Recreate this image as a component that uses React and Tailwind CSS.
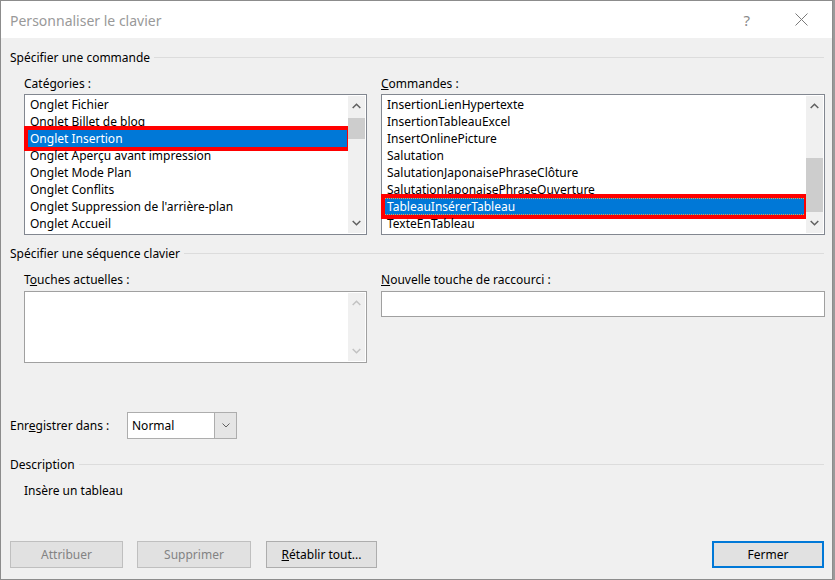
import React from 'react';

const font = { fontFamily: '"Segoe UI", "Noto Sans", "Open Sans", sans-serif' };

const categories = [
  'Onglet Fichier',
  'Onglet Billet de blog',
  'Onglet Insertion',
  'Onglet Aperçu avant impression',
  'Onglet Mode Plan',
  'Onglet Conflits',
  "Onglet Suppression de l'arrière-plan",
  'Onglet Accueil',
];

const commandes = [
  'InsertionLienHypertexte',
  'InsertionTableauExcel',
  'InsertOnlinePicture',
  'Salutation',
  'SalutationJaponaisePhraseClôture',
  'SalutationJaponaisePhraseOuverture',
  'TableauInsérerTableau',
  'TexteEnTableau',
];

function Chevron({ up, light }) {
  return (
    <svg width="9" height="6" viewBox="0 0 9 6" className="block">
      <path
        d={up ? 'M0.7 5 L4.5 1.2 L8.3 5' : 'M0.7 1 L4.5 4.8 L8.3 1'}
        fill="none"
        stroke={light ? '#c2c2c2' : '#606060'}
        strokeWidth="1.5"
      />
    </svg>
  );
}

function ScrollBar({ thumbTop, thumbHeight, disabled }) {
  return (
    <div className="relative w-[17px] shrink-0 bg-[#f0f0f0] flex flex-col justify-between items-center py-[7px]">
      <Chevron up light={disabled} />
      {thumbHeight ? (
        <div
          className="absolute left-0 right-0 bg-[#cdcdcd]"
          style={{ top: thumbTop, height: thumbHeight }}
        />
      ) : null}
      <Chevron light={disabled} />
    </div>
  );
}

function SectionHeader({ children }) {
  return (
    <div className="flex items-center h-[17px] pl-[9px] pr-[8px]">
      <span className="text-[12px] leading-[17px] text-black">{children}</span>
      <div className="flex-1 h-px bg-[#dcdcdc] ml-[4px]" />
    </div>
  );
}

function ListBox({ items, selected, focusDots, thumbTop, thumbHeight, width, redInset }) {
  return (
    <div className={`flex border border-[#828790] bg-white p-px h-[141px] ${width}`}>
      <div className="flex-1">
        {items.map((item, i) => (
          <div key={item} className="relative h-[17px]">
            <div
              className={`h-[17px] pl-[4px] pt-[1px] text-[12px] leading-[16px] whitespace-nowrap ${
                i === selected ? 'bg-[#0078d7] text-white' : 'text-black'
              } ${i === selected && focusDots ? 'outline outline-1 outline-dotted outline-[#e8a048] -outline-offset-1' : ''}`}
            >
              {item}
            </div>
            {i === selected && (
              <div className={`absolute border-[4px] border-[#ff0000] ${redInset}`} />
            )}
          </div>
        ))}
      </div>
      <ScrollBar thumbTop={thumbTop} thumbHeight={thumbHeight} />
    </div>
  );
}

function Button({ children, disabled, primary, width }) {
  return (
    <div
      className={`h-[27px] flex items-center justify-center text-[12px] bg-[#e1e1e1] ${width} ${
        primary ? 'border-2 border-[#0078d7]' : disabled ? 'border border-[#bfbfbf]' : 'border border-[#adadad]'
      } ${disabled ? 'text-[#838383]' : 'text-black'}`}
    >
      {children}
    </div>
  );
}

export default function App() {
  return (
    <div className="w-[835px] h-[580px] bg-[#9a9a9a]" style={font}>
      <div className="w-[833px] h-[580px] border border-[#8c8c8c] bg-[#f0f0f0] flex flex-col">
        {/* barre de titre */}
        <div className="h-[37px] bg-white flex items-center shrink-0">
          <span className="pl-[9px] text-[14px] text-[#999999] leading-[20px] pt-[2px]">
            Personnaliser le clavier
          </span>
          <div className="flex-1" />
          <span className="text-[15px] text-[#8a8a8a] mr-[45px] pt-[1px]">?</span>
          <svg width="13" height="13" viewBox="0 0 13 13" className="mr-[24px]">
            <path d="M0.5 0.5 L12.5 12.5 M12.5 0.5 L0.5 12.5" stroke="#7a7a7a" strokeWidth="1" />
          </svg>
        </div>

        <div className="mt-[11px]">
          <SectionHeader>Spécifier une commande</SectionHeader>
        </div>

        <div className="flex pl-[23px] gap-[14px] mt-[9px]">
          <div className="flex flex-col">
            <span className="text-[12px] leading-[17px] h-[19px]">
              Caté<u>g</u>ories :
            </span>
            <ListBox
              items={categories}
              selected={2}
              thumbTop={22}
              thumbHeight={21}
              width="w-[343px]"
              redInset="-top-[4px] -bottom-[4px] -left-[2px] -right-[3px]"
            />
          </div>
          <div className="flex flex-col">
            <span className="text-[12px] leading-[17px] h-[19px]">
              <u>C</u>ommandes :
            </span>
            <ListBox
              items={commandes}
              selected={6}
              focusDots
              thumbTop={62}
              thumbHeight={54}
              width="w-[444px]"
              redInset="-top-[4px] -bottom-[4px] -left-[2px] -right-[2px]"
            />
          </div>
        </div>

        <div className="mt-[10px]">
          <SectionHeader>Spécifier une séquence clavier</SectionHeader>
        </div>

        <div className="flex pl-[23px] gap-[14px] mt-[9px]">
          <div className="flex flex-col">
            <span className="text-[12px] leading-[17px] h-[20px]">
              T<u>o</u>uches actuelles :
            </span>
            <div className="flex w-[343px] h-[72px] border border-[#a0a0a0] bg-white p-px">
              <div className="flex-1" />
              <ScrollBar disabled />
            </div>
          </div>
          <div className="flex flex-col">
            <span className="text-[12px] leading-[17px] h-[20px]">
              <u>N</u>ouvelle touche de raccourci :
            </span>
            <div className="w-[444px] h-[26px] border border-[#a0a0a0] bg-white" />
          </div>
        </div>

        {/* enregistrer dans */}
        <div className="flex items-center pl-[9px] mt-[49px]">
          <span className="text-[12px] leading-[17px] w-[117px]">
            Enr<u>e</u>gistrer dans :
          </span>
          <div className="flex w-[110px] h-[27px] border border-[#adadad] bg-white">
            <span className="flex-1 pl-[4px] text-[12px] leading-[25px]">Normal</span>
            <div className="w-[22px] bg-[#e5e5e5] border-l border-[#adadad] flex items-center justify-center">
              <svg width="8" height="5" viewBox="0 0 8 5">
                <path d="M0.5 0.5 L4 4 L7.5 0.5" fill="none" stroke="#606060" strokeWidth="1" />
              </svg>
            </div>
          </div>
        </div>

        <div className="mt-[17px]">
          <SectionHeader>Description</SectionHeader>
        </div>

        <div className="pl-[23px] mt-[9px] text-[12px] leading-[17px]">Insère un tableau</div>

        <div className="flex mt-auto mb-[11px] pl-[9px] pr-[8px]">
          <Button disabled width="w-[113px]">Attribuer</Button>
          <div className="w-[14px]" />
          <Button disabled width="w-[114px]">Supprimer</Button>
          <div className="w-[15px]" />
          <Button width="w-[111px]">
            <span>
              <u>R</u>établir tout...
            </span>
          </Button>
          <div className="flex-1" />
          <Button primary width="w-[112px]">Fermer</Button>
        </div>
      </div>
    </div>
  );
}
